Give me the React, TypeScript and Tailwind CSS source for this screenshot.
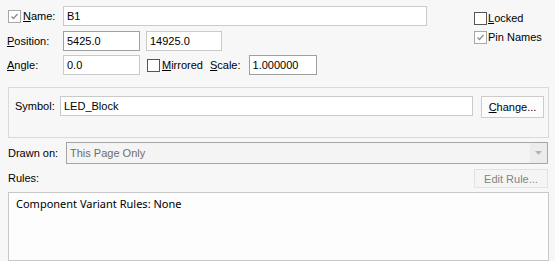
function Check({ checked = false, dim = false }: { checked?: boolean; dim?: boolean }) {
  return (
    <span
      className={`flex h-[13px] w-[13px] shrink-0 items-center justify-center border bg-white ${
        dim ? 'border-[#a8a8a8]' : 'border-[#555]'
      }`}
    >
      {checked && (
        <svg width="9" height="9" viewBox="0 0 9 9">
          <path d="M1.5 4.5 L3.5 6.5 L7.5 2" fill="none" stroke="#8c8c8c" strokeWidth="1.3" />
        </svg>
      )}
    </span>
  )
}

function Field({
  value,
  w,
  dark = false,
}: {
  value: string
  w: string
  dark?: boolean
}) {
  return (
    <div
      className={`flex h-[20px] ${w} items-center border bg-white pl-[3px] text-[11px] text-black ${
        dark ? 'border-[#a0a0a0]' : 'border-[#cacaca]'
      }`}
    >
      {value}
    </div>
  )
}

function Key({ k, rest }: { k: string; rest: string }) {
  return (
    <span>
      <span className="underline underline-offset-[1px]">{k}</span>
      {rest}
    </span>
  )
}

export default function App() {
  return (
    <div
      className="flex h-[261px] w-[555px] flex-col overflow-hidden bg-[#f7f7f7] text-[11px] text-black"
      style={{ fontFamily: '"Liberation Sans", Arial, sans-serif' }}
    >
      <div className="mt-[6px] flex">
        <div className="flex flex-col">
          <div className="flex h-[20px] items-center">
            <div className="flex w-[63px] items-center pl-[8px]">
              <Check checked dim />
              <span className="ml-[2px]">
                <Key k="N" rest="ame:" />
              </span>
            </div>
            <Field value="B1" w="w-[364px]" />
          </div>
          <div className="mt-[5px] flex h-[20px] items-center">
            <div className="w-[63px] pl-[7px]">
              <Key k="P" rest="osition:" />
            </div>
            <Field value="5425.0" w="w-[77px]" dark />
            <div className="ml-[6px]">
              <Field value="14925.0" w="w-[76px]" />
            </div>
          </div>
          <div className="mt-[4px] flex h-[20px] items-center">
            <div className="w-[63px] pl-[7px]">
              <Key k="A" rest="ngle:" />
            </div>
            <Field value="0.0" w="w-[77px]" />
            <div className="ml-[7px] flex items-center">
              <Check />
              <span className="ml-[2px]">
                <Key k="M" rest="irrored" />
              </span>
            </div>
            <span className="ml-[7px]">
              <Key k="S" rest="cale:" />
            </span>
            <div className="ml-[8px]">
              <Field value="1.000000" w="w-[68px]" dark />
            </div>
          </div>
        </div>
        <div className="ml-[47px] mt-[6px] flex flex-col gap-[6px]">
          <div className="flex h-[13px] items-center">
            <Check />
            <span className="ml-[1px]">
              <Key k="L" rest="ocked" />
            </span>
          </div>
          <div className="flex h-[13px] items-center">
            <Check checked dim />
            <span className="ml-[1px]">Pin Names</span>
          </div>
        </div>
      </div>

      <div className="ml-[8px] mt-[12px] h-[59px] w-[541px] border border-[#dadada] pl-[6px] pt-[8px]">
        <div className="flex items-start">
          <div className="flex h-[20px] w-[45px] items-center">Symbol:</div>
          <Field value="LED_Block" w="w-[413px]" />
          <div className="ml-[8px] flex h-[22px] w-[63px] items-center justify-center border border-[#cccccc] bg-[#fcfcfc]">
            <Key k="C" rest="hange..." />
          </div>
        </div>
      </div>

      <div className="mt-[4px] flex h-[22px] items-center pl-[8px]">
        <div className="w-[58px]">Drawn on:</div>
        <div className="flex h-[22px] w-[482px] items-center justify-between border border-[#a6a6a6] bg-[#f4f4f4] pl-[3px] text-[#6d6d6d]">
          <span>This Page Only</span>
          <div className="flex h-full w-[17px] items-center justify-center bg-[#ececec]">
            <svg width="7" height="4" viewBox="0 0 7 4">
              <path d="M0 0 H7 L3.5 4 Z" fill="#b5b5b5" />
            </svg>
          </div>
        </div>
      </div>

      <div className="mt-[5px] flex h-[19px] items-end justify-between pl-[8px] pr-[7px]">
        <span className="mb-[2px]">Rules:</span>
        <div className="flex h-[19px] w-[74px] items-center justify-center border border-[#e2e2e2] bg-[#f5f5f5] text-[#838383]">
          Edit Rule...
        </div>
      </div>

      <div
        className="ml-[8px] mt-[4px] h-[80px] w-[541px] border border-[#c8c8c8] bg-[#fdfdfd] pl-[7px] pt-[3px] text-[11px]"
        style={{ fontFamily: '"Noto Sans", "Open Sans", sans-serif' }}
      >
        Component Variant Rules: None
      </div>
    </div>
  )
}
